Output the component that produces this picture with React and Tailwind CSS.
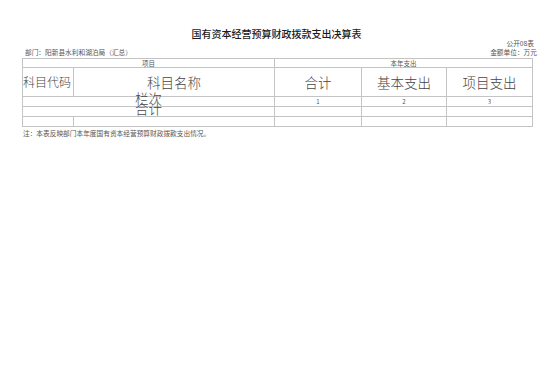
const cjk = "font-['Noto_Sans_CJK_SC','Noto_Sans',sans-serif]";

export default function App() {
  const line = "border border-[#c4c4c4]";
  return (
    <div className={`w-[553px] h-[391px] bg-white text-[#333] ${cjk}`}>
      <div className="pt-[28px] text-center text-[10px] leading-[12px] font-medium text-[#1a1a1a]">
        国有资本经营预算财政拨款支出决算表
      </div>
      <div className="mt-[-1px] pr-[19px] text-right text-[6.7px] leading-[8px] text-[#555]">公开08表</div>
      <div className="mt-[1px] pl-[25px] pr-[16px] flex justify-between text-[6.7px] leading-[8px] text-[#555]">
        <span>部门：阳新县水利和湖泊局（汇总）</span>
        <span>金额单位：万元</span>
      </div>
      <table className="mt-[2px] ml-[22px] w-[510px] table-fixed border-collapse text-[#444]">
        <colgroup>
          <col className="w-[51px]" />
          <col className="w-[201px]" />
          <col className="w-[87px]" />
          <col className="w-[85px]" />
          <col className="w-[86px]" />
        </colgroup>
        <tbody>
          <tr className="h-[9px]">
            <td colSpan={2} className={`${line} p-0 text-center text-[6.5px] leading-[8px] text-[#555]`}>项目</td>
            <td colSpan={3} className={`${line} p-0 text-center text-[6.5px] leading-[8px] text-[#555]`}>本年支出</td>
          </tr>
          <tr className="h-[29px]">
            <td className={`${line} p-0 text-left text-[12px] font-light whitespace-nowrap`}>科目代码</td>
            <td className={`${line} p-0 text-center text-[13.5px] font-light`}>科目名称</td>
            <td className={`${line} p-0 text-center text-[13.5px] font-light`}>合计</td>
            <td className={`${line} p-0 text-center text-[13.5px] font-light`}>基本支出</td>
            <td className={`${line} p-0 text-center text-[13.5px] font-light`}>项目支出</td>
          </tr>
          <tr className="h-[10px]">
            <td colSpan={2} className={`${line} p-0 text-center`}>
              <div className="h-[9px] text-[13.5px] leading-[9px] font-light -translate-y-[3px]">栏次</div>
            </td>
            <td className={`${line} p-0 text-center text-[6px] leading-[8px] text-[#555]`}>1</td>
            <td className={`${line} p-0 text-center text-[6px] leading-[8px] text-[#555]`}>2</td>
            <td className={`${line} p-0 text-center text-[6px] leading-[8px] text-[#555]`}>3</td>
          </tr>
          <tr className="h-[10px]">
            <td colSpan={2} className={`${line} p-0 text-center`}>
              <div className="h-[9px] text-[13.5px] leading-[9px] font-light -translate-y-[3px]">合计</div>
            </td>
            <td className={`${line} p-0`}></td>
            <td className={`${line} p-0`}></td>
            <td className={`${line} p-0`}></td>
          </tr>
          <tr className="h-[10px]">
            <td className={`${line} p-0`}></td>
            <td className={`${line} p-0`}></td>
            <td className={`${line} p-0`}></td>
            <td className={`${line} p-0`}></td>
            <td className={`${line} p-0`}></td>
          </tr>
        </tbody>
      </table>
      <div className="mt-[2px] pl-[23px] text-[6.7px] leading-[8px] text-[#555]">
        注：本表反映部门本年度国有资本经营预算财政拨款支出情况。
      </div>
    </div>
  );
}
